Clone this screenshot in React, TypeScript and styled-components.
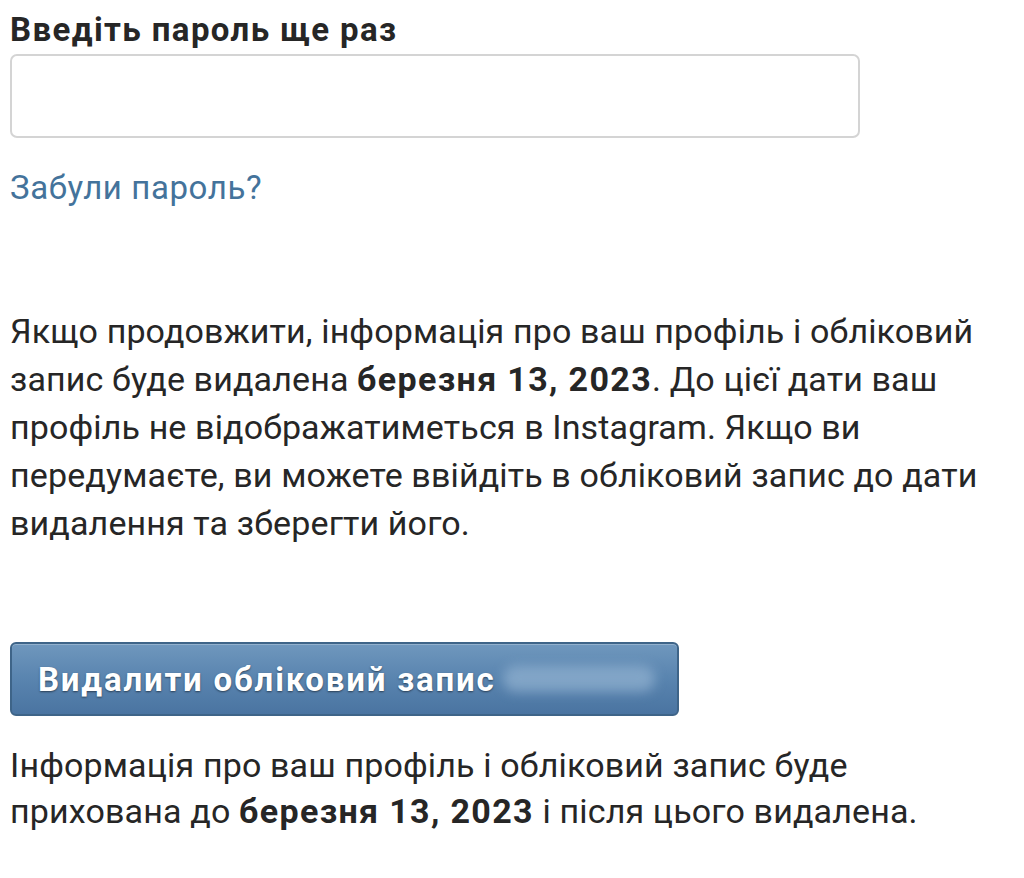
import React from "react";
import styled, { createGlobalStyle } from "styled-components";

const Global = createGlobalStyle`
  html, body { margin: 0; padding: 0; background: #ffffff; }
  body { font-family: Roboto, "Noto Sans", "Liberation Sans", sans-serif; color: #262626; }
`;

const Page = styled.div`
  width: 1024px;
  height: 878px;
  overflow: hidden;
  padding: 0 0 0 10px;
  box-sizing: border-box;
  display: flex;
  flex-direction: column;
  align-items: flex-start;
`;

const Label = styled.div`
  font-size: 33px;
  font-weight: 700;
  letter-spacing: 1.4px;
  line-height: 36px;
  margin-top: 12px;
  color: #262626;
`;

const Input = styled.div`
  margin-top: 6px;
  width: 850px;
  height: 84px;
  box-sizing: border-box;
  border: 2px solid #d4d4d4;
  border-radius: 7px;
  background: #fff;
`;

const Link = styled.a`
  margin-top: 32px;
  font-size: 33px;
  letter-spacing: 0.6px;
  line-height: 36px;
  color: #44739b;
  text-decoration: none;
`;

const Paragraph = styled.p<{ $tight?: boolean }>`
  margin: ${(p) => (p.$tight ? "26px 0 0" : "101px 0 0")};
  font-size: 34px;
  line-height: ${(p) => (p.$tight ? "46px" : "48px")};
  letter-spacing: ${(p) => (p.$tight ? "0.15px" : "0.13px")};
  color: #262626;
  white-space: nowrap;
  b {
    font-weight: 700;
    letter-spacing: 1.35px;
  }
`;

const Button = styled.button`
  margin-top: 95px;
  width: 669px;
  height: 74px;
  box-sizing: border-box;
  border: 2px solid #3e6488;
  border-radius: 6px;
  background: linear-gradient(#6f97bd 0%, #5984af 50%, #4a74a1 100%);
  box-shadow: inset 0 1px 0 rgba(255, 255, 255, 0.25);
  display: flex;
  align-items: center;
  padding: 0 0 0 26px;
  font-family: Roboto, "Noto Sans", "Liberation Sans", sans-serif;
  font-size: 33px;
  font-weight: 700;
  letter-spacing: 1.8px;
  color: #fff;
  text-shadow: 0 1px 2px rgba(0, 0, 0, 0.5);
  gap: 8px;
`;

const Blurred = styled.span`
  display: inline-block;
  width: 152px;
  height: 26px;
  border-radius: 13px;
  background: rgba(170, 198, 224, 0.5);
  filter: blur(6px);
`;

export default function App() {
  return (
    <>
      <Global />
      <Page>
        <Label>Введіть пароль ще раз</Label>
        <Input />
        <Link href="#">Забули пароль?</Link>
        <Paragraph>
          Якщо продовжити, інформація про ваш профіль і обліковий
          <br />
          запис буде видалена <b>березня 13, 2023</b>. До цієї дати ваш
          <br />
          профіль не відображатиметься в Instagram. Якщо ви
          <br />
          передумаєте, ви можете ввійдіть в обліковий запис до дати
          <br />
          видалення та зберегти його.
        </Paragraph>
        <Button>
          Видалити обліковий запис
          <Blurred />
        </Button>
        <Paragraph $tight>
          Інформація про ваш профіль і обліковий запис буде
          <br />
          прихована до <b>березня 13, 2023</b> і після цього видалена.
        </Paragraph>
      </Page>
    </>
  );
}
